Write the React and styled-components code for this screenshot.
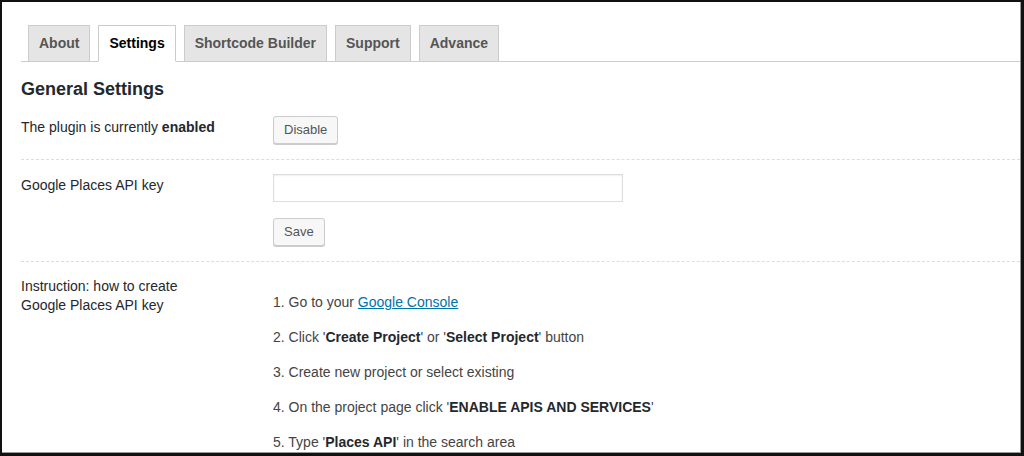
import React from 'react';
import styled, { createGlobalStyle } from 'styled-components';

const GlobalStyle = createGlobalStyle`
  html, body {
    margin: 0;
    padding: 0;
    background: #fff;
  }
  * {
    box-sizing: border-box;
  }
`;

const Frame = styled.div`
  width: 1024px;
  height: 456px;
  overflow: hidden;
  border-style: solid;
  border-color: #111;
  border-width: 2px 3px 3px 2px;
  box-shadow: inset -1px -1px 0 #9a9a9a;
  padding-left: 19px;
  font-family: "Liberation Sans", Arial, sans-serif;
  color: #23282d;
  background: #fff;
`;

const TabBar = styled.div`
  display: flex;
  gap: 8px;
  padding: 23px 0 0 7px;
  border-bottom: 1px solid #ccc;
  margin-right: 1px;
`;

const Tab = styled.div`
  height: 36px;
  line-height: 34px;
  padding: 0 10px;
  font-size: 14px;
  font-weight: 700;
  border: 1px solid #ccc;
  border-bottom: none;
  margin-bottom: -1px;
  color: ${p => (p.$active ? '#000' : '#555')};
  background: ${p => (p.$active ? '#fff' : '#e5e5e5')};
  ${p => p.$active && 'border-bottom: 1px solid #fff; height: 37px;'}
`;

const Heading = styled.h2`
  margin: 16px 0 0;
  font-size: 18px;
  line-height: 23px;
  font-weight: 700;
  color: #23282d;
`;

const Row = styled.div`
  display: grid;
  grid-template-columns: 252px 1fr;
  padding: ${p => p.$pad || '15px 0'};
  border-bottom: ${p => (p.$last ? 'none' : '1px dashed #ddd')};
  margin-right: 1px;
`;

const Label = styled.div`
  font-size: 14px;
  line-height: ${p => p.$lh || '20px'};
  margin-top: 1px;
  color: #23282d;
`;

const Field = styled.div`
  display: flex;
  flex-direction: column;
  align-items: flex-start;
  gap: 16px;
`;

const Button = styled.button`
  height: 28px;
  padding: 0 10px 1px;
  font-family: "Liberation Sans", Arial, sans-serif;
  font-size: 13px;
  color: #555;
  background: #f7f7f7;
  border: 1px solid #ccc;
  border-radius: 3px;
  box-shadow: 0 1px 0 #ccc;
  cursor: pointer;
`;

const Input = styled.input`
  width: 350px;
  height: 28px;
  border: 1px solid #ddd;
  border-radius: 0;
  box-shadow: inset 0 1px 2px rgba(0, 0, 0, 0.07);
  font-size: 14px;
  padding: 3px 5px;
`;

const Steps = styled.ol`
  list-style: none;
  margin: 16px 0 0;
  padding: 0;
  display: flex;
  flex-direction: column;
  gap: 15px;
`;

const Step = styled.li`
  font-size: 14px;
  line-height: 20px;
  color: #444;

  b {
    color: #23282d;
  }
`;

const Link = styled.a`
  color: #0073aa;
  text-decoration: underline;
`;

const tabs = ['About', 'Settings', 'Shortcode Builder', 'Support', 'Advance'];

export default function App() {
  return (
    <>
      <GlobalStyle />
      <Frame>
        <TabBar>
          {tabs.map(t => (
            <Tab key={t} $active={t === 'Settings'}>{t}</Tab>
          ))}
        </TabBar>

        <Heading>General Settings</Heading>

        <Row>
          <Label>The plugin is currently <b>enabled</b></Label>
          <Field>
            <Button>Disable</Button>
          </Field>
        </Row>

        <Row $pad="14px 0 15px">
          <Label>Google Places API key</Label>
          <Field>
            <Input type="text" />
            <Button>Save</Button>
          </Field>
        </Row>

        <Row $pad="14px 0 0" $last>
          <Label $lh="19px">
            Instruction: how to create
            <br />
            Google Places API key
          </Label>
          <Steps>
            <Step>1. Go to your <Link href="#">Google Console</Link></Step>
            <Step>2. Click '<b>Create Project</b>' or '<b>Select Project</b>' button</Step>
            <Step>3. Create new project or select existing</Step>
            <Step>4. On the project page click '<b>ENABLE APIS AND SERVICES</b>'</Step>
            <Step>5. Type '<b>Places API</b>' in the search area</Step>
          </Steps>
        </Row>
      </Frame>
    </>
  );
}
